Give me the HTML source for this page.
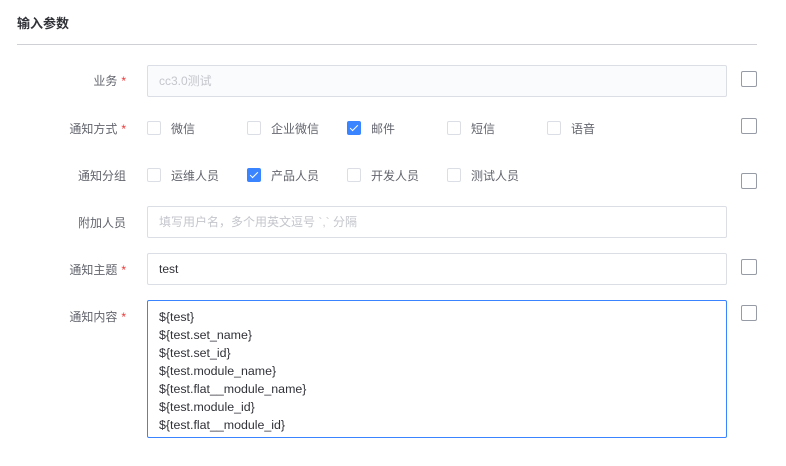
<!DOCTYPE html>
<html><head><meta charset="utf-8"><style>
body{margin:0;width:786px;height:466px;background:#fff;font-family:"Liberation Sans","Noto Sans CJK SC",sans-serif;font-size:12px;color:#63656e;position:relative;overflow:hidden}
.a{position:absolute}
.t{left:17px;top:13px;font-size:13px;font-weight:bold;color:#313238}
.hr{left:17px;top:44px;width:740px;height:1px;background:#cfd0d5}
.lb{right:660px;text-align:right;white-space:nowrap;color:#63656e}
.lb i{font-style:normal;color:#ea3636;margin-left:4px}
.in{left:147px;width:580px;border:1px solid #dcdee5;border-radius:2px;box-sizing:border-box;padding-left:11px;line-height:30px;height:32px}
.cb{width:14px;height:14px;border:1px solid #dcdee5;border-radius:2px;box-sizing:border-box;background:#fff}
.cb.on{background:#3a84ff;border-color:#3a84ff}
.cb.on:after{content:"";position:absolute;left:4px;top:1px;width:3px;height:7px;border:solid #fff;border-width:0 1.5px 1.5px 0;transform:rotate(45deg)}
.ct{color:#63656e}
.rb{left:741px;width:16px;height:16px;border:1px solid #979ba5;border-radius:2px;box-sizing:border-box}
.ta{left:147px;top:300px;width:580px;height:138px;border:1px solid #3a84ff;border-radius:2px;box-sizing:border-box;padding:7px 11px;line-height:18px;color:#313238;font-size:12.4px}
</style></head><body>
<div class="a t">输入参数</div>
<div class="a hr"></div>

<div class="a lb" style="top:72px">业务<i>*</i></div>
<div class="a in" style="top:65px;background:#fafbfd;color:#c4c6cc">cc3.0测试</div>

<div class="a lb" style="top:120px">通知方式<i>*</i></div>
<div class="a cb" style="left:147px;top:121px"></div><div class="a ct" style="left:171px;top:120px">微信</div>
<div class="a cb" style="left:247px;top:121px"></div><div class="a ct" style="left:271px;top:120px">企业微信</div>
<div class="a cb on" style="left:347px;top:121px"></div><div class="a ct" style="left:371px;top:120px">邮件</div>
<div class="a cb" style="left:447px;top:121px"></div><div class="a ct" style="left:471px;top:120px">短信</div>
<div class="a cb" style="left:547px;top:121px"></div><div class="a ct" style="left:571px;top:120px">语音</div>

<div class="a lb" style="top:167px">通知分组</div>
<div class="a cb" style="left:147px;top:168px"></div><div class="a ct" style="left:171px;top:167px">运维人员</div>
<div class="a cb on" style="left:247px;top:168px"></div><div class="a ct" style="left:271px;top:167px">产品人员</div>
<div class="a cb" style="left:347px;top:168px"></div><div class="a ct" style="left:371px;top:167px">开发人员</div>
<div class="a cb" style="left:447px;top:168px"></div><div class="a ct" style="left:471px;top:167px">测试人员</div>

<div class="a lb" style="top:214px">附加人员</div>
<div class="a in" style="top:206px;color:#c4c6cc">填写用户名，多个用英文逗号 `,` 分隔</div>

<div class="a lb" style="top:261px">通知主题<i>*</i></div>
<div class="a in" style="top:253px;color:#313238">test</div>

<div class="a lb" style="top:308px">通知内容<i>*</i></div>
<div class="a ta">${test}<br>${test.set_name}<br>${test.set_id}<br>${test.module_name}<br>${test.flat__module_name}<br>${test.module_id}<br>${test.flat__module_id}</div>

<div class="a rb" style="top:71px"></div>
<div class="a rb" style="top:118px"></div>
<div class="a rb" style="top:173px"></div>
<div class="a rb" style="top:259px"></div>
<div class="a rb" style="top:305px"></div>
</body></html>
